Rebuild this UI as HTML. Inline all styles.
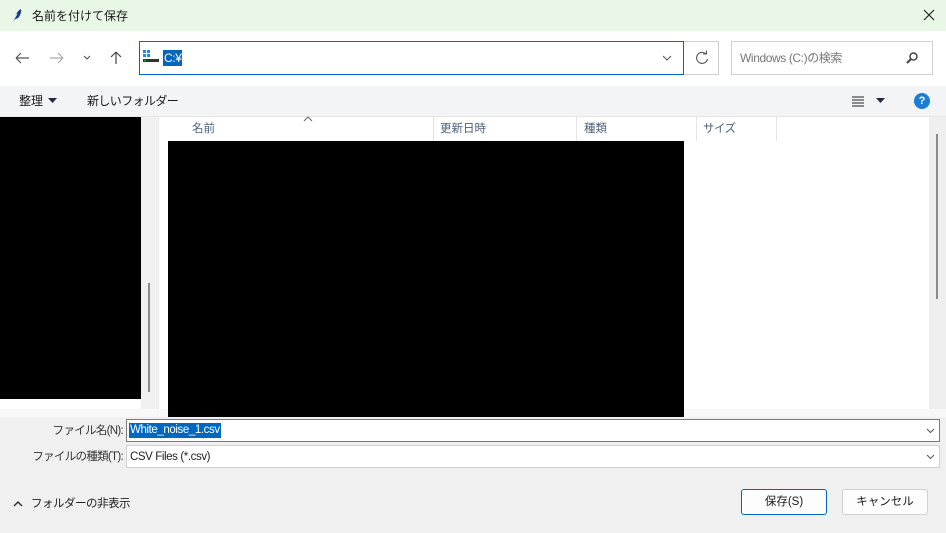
<!DOCTYPE html>
<html><head><meta charset="utf-8"><style>
*{margin:0;padding:0;box-sizing:border-box}
body{width:946px;height:533px;position:relative;overflow:hidden;background:#f0f0f0;font-family:"Liberation Sans","Noto Sans CJK JP",sans-serif;font-size:11.5px;line-height:14px;color:#1a1a1a}
.a{position:absolute}
.n{letter-spacing:-0.4px}
</style></head><body>
<div class="a" style="left:0;top:0;width:946px;height:31px;background:#e9f7e6"></div>
<svg class="a" style="left:11px;top:8px" width="12" height="15" viewBox="0 0 12 15"><path d="M2 14 L4 9 Q6 3 10 1 Q11 4 8 9 Q6 11 4 11 Z" fill="#1a3a8a"/><path d="M1 14 L6 6" stroke="#fff" stroke-width="0.8"/></svg>
<div class="a" style="left:32px;top:9px;font-size:12px">名前を付けて保存</div>
<svg class="a" style="left:923px;top:9px" width="12" height="12"><path d="M1 1L11 11M11 1L1 11" stroke="#222" stroke-width="1.2"/></svg>
<div class="a" style="left:0;top:31px;width:946px;height:55px;background:#fff"></div>
<svg class="a" style="left:14px;top:50px" width="120" height="16" viewBox="0 0 120 16">
<path d="M2 8H15M2 8L7 3M2 8L7 13" stroke="#555" stroke-width="1.2" fill="none"/>
<path d="M36 8H49M49 8L44 3M49 8L44 13" stroke="#aaa" stroke-width="1.2" fill="none"/>
<path d="M70 6L73 9L76 6" stroke="#555" stroke-width="1.1" fill="none"/>
<path d="M102 14V2M102 2L97 7M102 2L107 7" stroke="#444" stroke-width="1.2" fill="none"/>
</svg>
<div class="a" style="left:139px;top:41px;width:545px;height:34px;border:1px solid #0067c0;background:#fff"></div>
<svg class="a" style="left:142px;top:49px" width="18" height="16"><rect x="1" y="1" width="3" height="3" fill="#1e88e5"/><rect x="5" y="1" width="3" height="3" fill="#1e88e5"/><rect x="1" y="5" width="3" height="3" fill="#1e88e5"/><rect x="5" y="5" width="3" height="3" fill="#1e88e5"/><rect x="1" y="10" width="16" height="3" fill="#333"/><rect x="2" y="11" width="2" height="1" fill="#4caf50"/></svg>
<div class="a n" style="left:163px;top:50px;height:16px;background:#0067c0;color:#fff;padding:0 1px;font-size:12px;line-height:16px">C:¥</div>
<svg class="a" style="left:662px;top:55px" width="10" height="6"><path d="M1 1L5 5L9 1" stroke="#555" fill="none"/></svg>
<div class="a" style="left:684px;top:41px;width:35px;height:34px;border:1px solid #d0d0d0;border-left:none"></div>
<svg class="a" style="left:694px;top:50px" width="16" height="16"><path d="M12 4A5.5 5.5 0 1 0 13.5 9" stroke="#555" stroke-width="1.1" fill="none"/><path d="M9 4H12.5V0.5" stroke="#555" stroke-width="1.1" fill="none"/></svg>
<div class="a" style="left:731px;top:41px;width:202px;height:34px;border:1px solid #d0d0d0"></div>
<div class="a n" style="left:740px;top:51px;color:#777;font-size:12px">Windows (C:)の検索</div>
<svg class="a" style="left:905px;top:51px" width="14" height="14"><circle cx="8.5" cy="5.5" r="3.5" stroke="#444" stroke-width="1.5" fill="none"/><path d="M6 8L2 12" stroke="#444" stroke-width="2"/></svg>
<div class="a" style="left:0;top:86px;width:946px;height:31px;background:#f3f4f6;border-bottom:1px solid #e6e6e6"></div>
<div class="a" style="left:19px;top:94px;font-size:12px">整理</div>
<svg class="a" style="left:48px;top:98px" width="9" height="5"><path d="M0 0H9L4.5 5Z" fill="#1f2a44"/></svg>
<div class="a" style="left:87px;top:94px;font-size:12px;letter-spacing:-0.6px">新しいフォルダー</div>
<svg class="a" style="left:851px;top:95px" width="14" height="12"><path d="M1 2H13M1 5H13M1 8H13M1 11H13" stroke="#222" stroke-width="1"/></svg>
<svg class="a" style="left:876px;top:98px" width="9" height="5"><path d="M0 0H9L4.5 5Z" fill="#1f2a44"/></svg>
<div class="a" style="left:914px;top:93px;width:16px;height:16px;border-radius:50%;background:#1a7fd4;color:#fff;font-weight:bold;font-size:11px;text-align:center;line-height:16px">?</div>
<div class="a" style="left:0;top:117px;width:141px;height:292px;background:#fff"></div>
<div class="a" style="left:0;top:117px;width:141px;height:282px;background:#000"></div>
<div class="a" style="left:141px;top:117px;width:16px;height:292px;background:#f0f0f0"></div>
<div class="a" style="left:148px;top:283px;width:2px;height:109px;background:#8a8a8a"></div>
<div class="a" style="left:158px;top:117px;width:771px;height:292px;background:#fff;border-left:1px solid #eaeaea"></div>
<div class="a" style="left:929px;top:117px;width:17px;height:292px;background:#efefef"></div>
<div class="a" style="left:936px;top:134px;width:2px;height:165px;background:#8a8a8a"></div>
<div class="a" style="left:0;top:409px;width:946px;height:4px;background:#f8f8f8"></div>
<div style="color:#4c5f7a">
<div class="a" style="left:192px;top:122px">名前</div>
<div class="a" style="left:440px;top:122px">更新日時</div>
<div class="a" style="left:584px;top:122px">種類</div>
<div class="a" style="left:703px;top:122px;letter-spacing:-0.5px">サイズ</div>
</div>
<svg class="a" style="left:303px;top:116px" width="10" height="6"><path d="M1 5L5 1L9 5" stroke="#666" fill="none"/></svg>
<div class="a" style="left:433px;top:117px;width:1px;height:24px;background:#e5e5e5"></div>
<div class="a" style="left:576px;top:117px;width:1px;height:24px;background:#e5e5e5"></div>
<div class="a" style="left:696px;top:117px;width:1px;height:24px;background:#e5e5e5"></div>
<div class="a" style="left:776px;top:117px;width:1px;height:24px;background:#e5e5e5"></div>
<div class="a" style="left:168px;top:141px;width:516px;height:276px;background:#000"></div>
<div class="a" style="left:0;top:417px;width:946px;height:116px;background:#f0f0f0"></div>
<div class="a" style="left:0;top:413px;width:168px;height:4px;background:#f8f8f8"></div>
<div class="a" style="left:684px;top:413px;width:262px;height:4px;background:#f8f8f8"></div>
<div class="a" style="left:0;top:424px;width:123px;text-align:right;color:#333;letter-spacing:-0.7px;white-space:nowrap">ファイル名(N):</div>
<div class="a" style="left:126px;top:419px;width:814px;height:23px;background:#fff;border:1px solid #7a7a7a"></div>
<div class="a n" style="left:129px;top:423px;height:15px;background:#0067c0;color:#fff;padding:0 1px;line-height:15px">White_noise_1.csv</div>
<svg class="a" style="left:926px;top:428px" width="9" height="6"><path d="M1 1L4.5 4.5L8 1" stroke="#555" fill="none"/></svg>
<div class="a" style="left:0;top:450px;width:123px;text-align:right;color:#333;letter-spacing:-0.7px;white-space:nowrap">ファイルの種類(T):</div>
<div class="a" style="left:126px;top:445px;width:814px;height:23px;background:#fff;border:1px solid #d0d0d0"></div>
<div class="a n" style="left:130px;top:450px;color:#222">CSV Files (*.csv)</div>
<svg class="a" style="left:926px;top:454px" width="9" height="6"><path d="M1 1L4.5 4.5L8 1" stroke="#555" fill="none"/></svg>
<svg class="a" style="left:13px;top:500px" width="10" height="7"><path d="M1 6L5 2L9 6" stroke="#333" stroke-width="1.5" fill="none"/></svg>
<div class="a" style="left:31px;top:497px;color:#222;letter-spacing:-0.5px">フォルダーの非表示</div>
<div class="a" style="left:741px;top:489px;width:86px;height:26px;background:#fdfdfd;border:1px solid #0067c0;border-radius:3px;text-align:center;line-height:24px">保存(S)</div>
<div class="a" style="left:842px;top:489px;width:86px;height:26px;background:#fdfdfd;border:1px solid #d0d0d0;border-radius:3px;text-align:center;line-height:24px">キャンセル</div>
</body></html>
